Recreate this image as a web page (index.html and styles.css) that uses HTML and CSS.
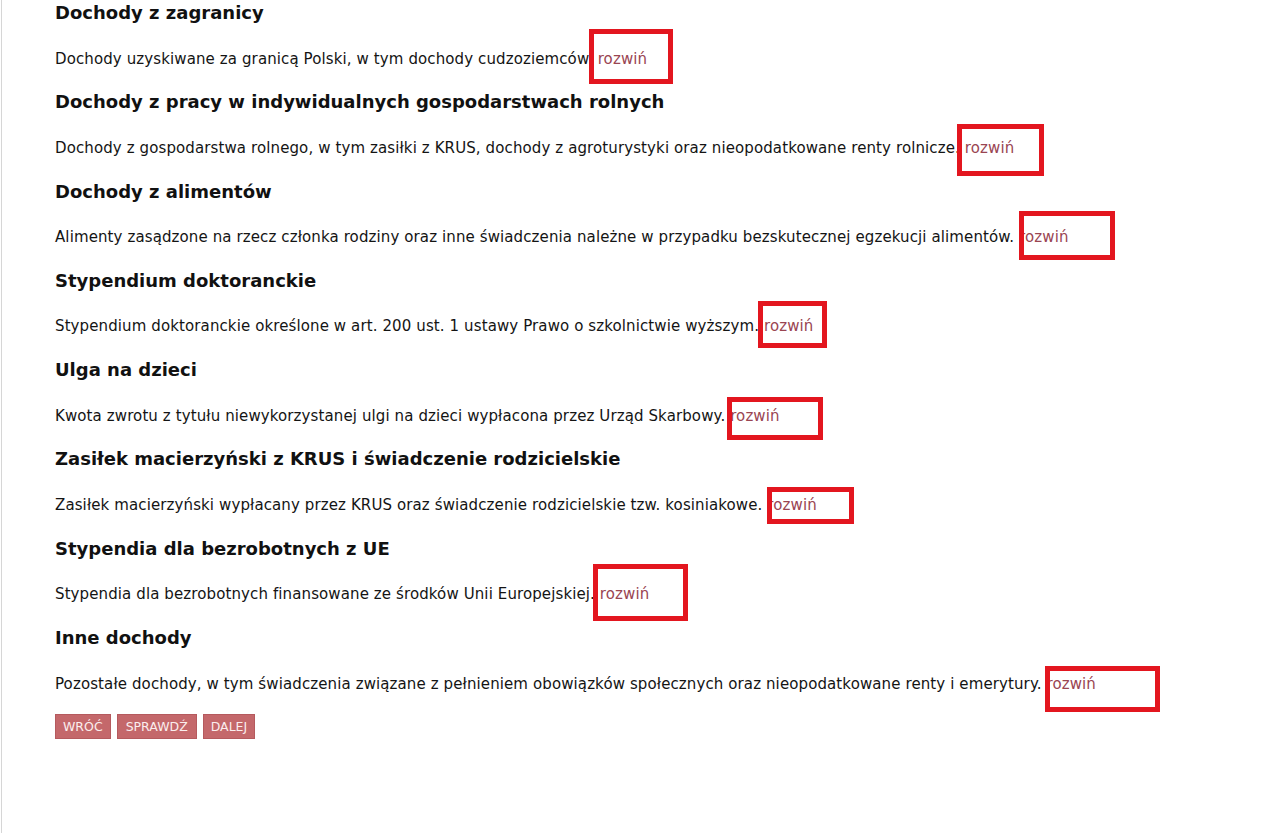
FILE: index.html
```html
<!DOCTYPE html>
<html lang="pl">
<head>
<meta charset="utf-8">
<title>Dochody</title>
<link rel="stylesheet" href="styles.css">
</head>
<body>
<div class="page">
  <main class="content">
    <section class="item">
      <h2>Dochody z zagranicy</h2>
      <p>Dochody uzyskiwane za granicą Polski, w tym dochody cudzoziemców. <a href="#">rozwiń</a></p>
    </section>
    <section class="item">
      <h2>Dochody z pracy w indywidualnych gospodarstwach rolnych</h2>
      <p>Dochody z gospodarstwa rolnego, w tym zasiłki z KRUS, dochody z agroturystyki oraz nieopodatkowane renty rolnicze. <a href="#">rozwiń</a></p>
    </section>
    <section class="item">
      <h2>Dochody z alimentów</h2>
      <p>Alimenty zasądzone na rzecz członka rodziny oraz inne świadczenia należne w przypadku bezskutecznej egzekucji alimentów. <a href="#">rozwiń</a></p>
    </section>
    <section class="item">
      <h2>Stypendium doktoranckie</h2>
      <p>Stypendium doktoranckie określone w art. 200 ust. 1 ustawy Prawo o szkolnictwie wyższym. <a href="#">rozwiń</a></p>
    </section>
    <section class="item">
      <h2>Ulga na dzieci</h2>
      <p>Kwota zwrotu z tytułu niewykorzystanej ulgi na dzieci wypłacona przez Urząd Skarbowy. <a href="#">rozwiń</a></p>
    </section>
    <section class="item">
      <h2>Zasiłek macierzyński z KRUS i świadczenie rodzicielskie</h2>
      <p>Zasiłek macierzyński wypłacany przez KRUS oraz świadczenie rodzicielskie tzw. kosiniakowe. <a href="#">rozwiń</a></p>
    </section>
    <section class="item">
      <h2>Stypendia dla bezrobotnych z UE</h2>
      <p>Stypendia dla bezrobotnych finansowane ze środków Unii Europejskiej. <a href="#">rozwiń</a></p>
    </section>
    <section class="item">
      <h2>Inne dochody</h2>
      <p>Pozostałe dochody, w tym świadczenia związane z pełnieniem obowiązków społecznych oraz nieopodatkowane renty i emerytury. <a href="#">rozwiń</a></p>
    </section>
    <div class="buttons">
      <button class="btn btn-back">WRÓĆ</button>
      <button class="btn btn-check">SPRAWDŹ</button>
      <button class="btn btn-next">DALEJ</button>
    </div>
  </main>
  <div class="mark m1"></div>
  <div class="mark m2"></div>
  <div class="mark m3"></div>
  <div class="mark m4"></div>
  <div class="mark m5"></div>
  <div class="mark m6"></div>
  <div class="mark m7"></div>
  <div class="mark m8"></div>
</div>
</body>
</html>
```

FILE: styles.css
```css
html, body {
  margin: 0;
  padding: 0;
  background: #ffffff;
}
body {
  font-family: "DejaVu Sans", Verdana, sans-serif;
  color: #141414;
}
.page {
  position: relative;
  min-height: 833px;
  border-left: 1px solid #d6d6d6;
  margin-left: 1px;
}
.content {
  padding: 0 0 0 53px;
}
.item h2 {
  margin: 0;
  font-size: 18px;
  line-height: 26px;
  font-weight: bold;
  color: #111111;
}
.item p {
  margin: 22.5px 0 20.8px 0;
  font-size: 15px;
  line-height: 20px;
  letter-spacing: 0.11px;
}
.item p a {
  color: #9a4552;
  text-decoration: none;
}
.buttons {
  display: flex;
  gap: 6px;
  margin-top: 6px;
}
.btn {
  height: 25px;
  padding: 0 7px;
  border: 1px solid #b55a5e;
  background: #c4686b;
  color: #fbeeee;
  font-family: "DejaVu Sans", Verdana, sans-serif;
  font-size: 12.5px;
  line-height: 23px;
}
.btn-check {
  padding: 0 8px;
}
.mark {
  position: absolute;
  border: 5px solid #e3161f;
  box-sizing: border-box;
}
.m1 { left: 587px; top: 29px; width: 84px; height: 55px; }
.m2 { left: 955px; top: 124px; width: 87px; height: 52px; }
.m3 { left: 1017px; top: 211px; width: 96px; height: 49px; }
.m4 { left: 756px; top: 301px; width: 69px; height: 47px; }
.m5 { left: 725px; top: 397px; width: 96px; height: 43px; }
.m6 { left: 765px; top: 487px; width: 87px; height: 37px; }
.m7 { left: 591px; top: 564px; width: 95px; height: 57px; }
.m8 { left: 1043px; top: 666px; width: 115px; height: 46px; }
```
